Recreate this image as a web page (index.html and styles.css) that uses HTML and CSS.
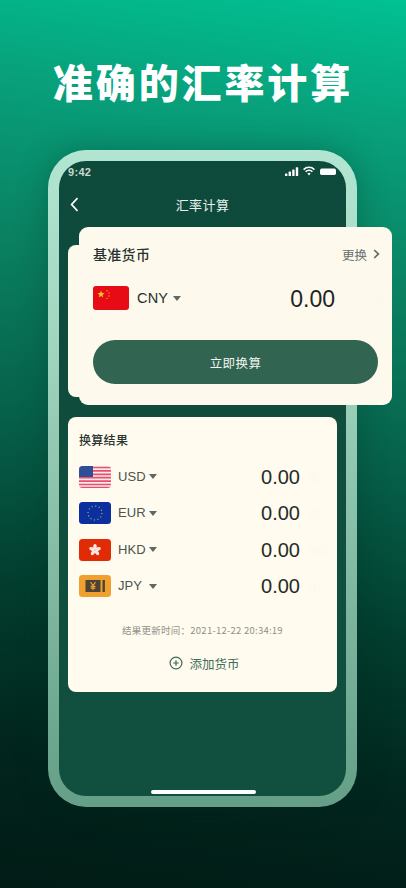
FILE: index.html
```html
<!DOCTYPE html>
<html lang="zh-CN">
<head>
<meta charset="utf-8">
<title>准确的汇率计算</title>
<link rel="stylesheet" href="styles.css">
</head>
<body>
<main class="page">
  <h1 class="headline">准确的汇率计算</h1>
  <section class="phone">
    <div class="screen">
      <div class="status">
        <span class="clock">9:42</span>
        <svg class="status-icons" width="52" height="11" viewBox="0 0 52 11">
          <rect x="0" y="7.4" width="2.4" height="2.6" rx=".6" fill="#fff"/>
          <rect x="3.6" y="5.6" width="2.4" height="4.4" rx=".6" fill="#fff"/>
          <rect x="7.2" y="3.4" width="2.4" height="6.6" rx=".6" fill="#fff"/>
          <rect x="10.8" y="1.2" width="2.4" height="8.8" rx=".6" fill="#fff"/>
          <path d="M18.6 3.6a7.6 7.6 0 0 1 10.8 0M20.6 5.8a4.6 4.6 0 0 1 6.8 0" fill="none" stroke="#fff" stroke-width="1.5"/>
          <path d="M22.4 7.6a2.2 2.2 0 0 1 3.2 0L24 9.6z" fill="#fff"/>
          <rect x="35" y="2.6" width="16" height="6.4" rx="1.8" fill="#fff"/>
        </svg>
      </div>
      <header class="nav">
        <svg class="back" width="9" height="15" viewBox="0 0 9 15"><path d="M7.5 1.2 1.6 7.5l5.9 6.3" fill="none" stroke="#fff" stroke-width="1.7"/></svg>
        <span class="nav-title">汇率计算</span>
      </header>

      <section class="base-card">
        <div class="base-head">
          <span class="base-title">基准货币</span>
          <span class="change">更换
            <svg width="7" height="10" viewBox="0 0 7 10"><path d="M1.2 1 5.4 5 1.2 9" fill="none" stroke="#5f6b66" stroke-width="1.7"/></svg>
          </span>
        </div>
        <div class="base-row">
          <svg class="flag-lg" viewBox="0 0 36 24">
            <rect width="36" height="24" rx="3" fill="#e60b14"/>
            <polygon points="8,4.6 8.9,7.1 11.6,7.2 9.5,8.9 10.2,11.5 8,10 5.8,11.5 6.5,8.9 4.4,7.2 7.1,7.1" fill="#f8c62a"/>
            <circle cx="14" cy="4.8" r=".7" fill="#f3a12a"/><circle cx="16" cy="7" r=".7" fill="#f3a12a"/>
            <circle cx="16" cy="10" r=".7" fill="#f3a12a"/><circle cx="14" cy="12.4" r=".7" fill="#f3a12a"/>
          </svg>
          <span class="code-lg">CNY</span>
          <i class="caret caret-lg"></i>
          <span class="amount-lg">0.00</span>
          <span class="ghost-lg">人民币</span>
        </div>
        <button class="convert">立即换算</button>
      </section>

      <section class="result-card">
        <h2 class="result-title">换算结果</h2>
        <ul class="rates">
          <li class="rate">
            <svg class="flag" viewBox="0 0 32 22">
              <defs><clipPath id="c1"><rect width="32" height="22" rx="3.5"/></clipPath></defs>
              <g clip-path="url(#c1)">
                <rect width="32" height="22" fill="#fbeaea"/>
                <path d="M0 1.5h32M0 4.9h32M0 8.3h32M0 11.7h32M0 15.1h32M0 18.5h32M0 21.5h32" stroke="#e8506f" stroke-width="1.7"/>
                <rect width="14" height="11" fill="#2f5099"/>
              </g>
            </svg>
            <span class="code">USD</span><i class="caret"></i>
            <span class="amount">0.00</span><span class="ghost">美元</span>
          </li>
          <li class="rate">
            <svg class="flag" viewBox="0 0 32 22">
              <rect width="32" height="22" rx="3.5" fill="#0b2f9e"/>
              <circle cx="16" cy="11" r="7" fill="none" stroke="#c9b64a" stroke-width="1.1" stroke-dasharray="1.1 2.56"/>
            </svg>
            <span class="code">EUR</span><i class="caret"></i>
            <span class="amount">0.00</span><span class="ghost">欧元</span>
          </li>
          <li class="rate">
            <svg class="flag" viewBox="0 0 32 22">
              <rect width="32" height="22" rx="3.5" fill="#e12a06"/>
              <g fill="#fde8e0" transform="translate(3.2 2.2) scale(.8)">
                <ellipse cx="16" cy="7" rx="2.2" ry="3.6"/>
                <ellipse cx="16" cy="7" rx="2.2" ry="3.6" transform="rotate(72 16 11)"/>
                <ellipse cx="16" cy="7" rx="2.2" ry="3.6" transform="rotate(144 16 11)"/>
                <ellipse cx="16" cy="7" rx="2.2" ry="3.6" transform="rotate(216 16 11)"/>
                <ellipse cx="16" cy="7" rx="2.2" ry="3.6" transform="rotate(288 16 11)"/>
              </g>
            </svg>
            <span class="code">HKD</span><i class="caret"></i>
            <span class="amount">0.00</span><span class="ghost">港币</span>
          </li>
          <li class="rate">
            <svg class="flag" viewBox="0 0 32 22">
              <rect width="32" height="22" rx="3.5" fill="#efa02e"/>
              <rect x="6.5" y="5" width="15" height="12" fill="#4b4436"/>
              <rect x="23.5" y="5" width="2.4" height="12" fill="#4b4436"/>
              <path d="M11.5 7.2 14 10.6l2.5-3.4M14 10.6V15M11.6 11.4h4.8M11.6 13.2h4.8" fill="none" stroke="#efa02e" stroke-width="1.2"/>
            </svg>
            <span class="code">JPY</span><i class="caret"></i>
            <span class="amount">0.00</span><span class="ghost">日元</span>
          </li>
        </ul>
        <p class="updated">结果更新时间：2021-12-22 20:34:19</p>
        <div class="add">
          <svg width="14" height="14" viewBox="0 0 14 14"><circle cx="7" cy="7" r="5.9" fill="none" stroke="#3d6a59" stroke-width="1.2"/><path d="M7 4.2v5.6M4.2 7h5.6" stroke="#3d6a59" stroke-width="1.2"/></svg>
          <span>添加货币</span>
        </div>
      </section>

      <div class="home-bar"></div>
    </div>
  </section>
</main>
</body>
</html>
```
FILE: styles.css
```css
* { box-sizing: border-box; margin: 0; padding: 0; }
html, body { width: 406px; height: 888px; overflow: hidden; }
body { font-family: "Noto Sans CJK SC", "Noto Sans", sans-serif; }

.page {
  width: 406px;
  height: 888px;
  padding: 51px 0 0 48px;
  overflow: hidden;
  background: linear-gradient(188deg, #01c192 0%, #08a07b 14%, #0a7f60 32%, #06604a 50%, #023d2e 68%, #01261d 84%, #011b15 100%);
}

.headline {
  width: 310px;
  height: 60px;
  margin-bottom: 39px;
  font-size: 40px;
  line-height: 60px;
  font-weight: 900;
  letter-spacing: 2.9px;
  color: #fff;
  text-align: center;
  white-space: nowrap;
}

.phone {
  width: 309px;
  height: 657px;
  padding: 11px;
  border-radius: 38px;
  background: linear-gradient(180deg, #b3e6d2 0%, #a0d5c0 30%, #7db59e 70%, #659f87 100%);
  box-shadow: 0 0 32px rgba(0, 40, 30, .3);
}

.screen {
  position: relative;
  width: 287px;
  height: 635px;
  border-radius: 27px;
  background: linear-gradient(180deg, #0e4a3b 0%, #11503f 100%);
  padding: 6px 0 0;
}

.status {
  display: flex;
  justify-content: space-between;
  align-items: center;
  height: 11px;
  padding: 0 9px 0 9px;
}
.clock { font: 600 11px/11px "Liberation Sans", sans-serif; color: #c9d8d1; letter-spacing: .3px; }
.status-icons { margin-top: -2px; }

.nav {
  position: relative;
  display: flex;
  justify-content: center;
  align-items: center;
  height: 24px;
  margin-top: 15px;
}
.back { position: absolute; left: 11px; top: 4px; }
.nav-title { font-size: 13px; line-height: 24px; color: #e8f0ec; letter-spacing: .4px; }

.base-card {
  position: relative;
  width: 313px;
  height: 178px;
  margin: 10px 0 0 20px;
  padding: 15px 14px 0;
  border-radius: 9px;
  background: #fdf9ec;
}
.base-card::before {
  content: "";
  position: absolute;
  left: -11px;
  top: 18px;
  width: 40px;
  height: 152px;
  border-radius: 8px;
  background: #fdf9ec;
}

.base-head {
  position: relative;
  display: flex;
  justify-content: space-between;
  align-items: center;
  height: 24px;
  margin-right: -2px;
}
.base-title { font-size: 14px; line-height: 24px; font-weight: 500; color: #26302c; letter-spacing: .3px; }
.change { display: flex; align-items: center; gap: 6px; font-size: 12.5px; color: #66706c; }

.base-row {
  position: relative;
  display: flex;
  align-items: center;
  height: 24px;
  margin-top: 20px;
}
.flag-lg { width: 36px; height: 24px; flex: none; }
.code-lg { margin-left: 8px; font: 400 14.5px/24px "Liberation Sans", sans-serif; color: #27302d; letter-spacing: .2px; }
.amount-lg { margin-left: auto; padding-top: 2px; font: 400 23px/24px "Liberation Sans", sans-serif; color: #1e2523; }
.ghost-lg { width: 43px; padding-left: 18px; font-size: 11px; color: #fcf8ea; white-space: nowrap; }

.caret {
  display: block;
  flex: none;
  width: 0;
  height: 0;
  border-left: 4px solid transparent;
  border-right: 4px solid transparent;
  border-top: 5px solid #5d6763;
}
.caret-lg { margin-left: 5px; }

.convert {
  position: relative;
  display: block;
  width: 285px;
  height: 44px;
  margin-top: 30px;
  border: 0;
  border-radius: 22px;
  background: #326452;
  color: #f1f5ee;
  font-family: inherit;
  font-size: 12.5px;
  letter-spacing: .4px;
}

.result-card {
  width: 269px;
  height: 275px;
  margin: 12px 0 0 9px;
  padding: 13px 11px 0;
  border-radius: 8px;
  background: #fffbee;
}
.result-title { font-size: 12px; line-height: 20px; font-weight: 500; color: #2a3430; letter-spacing: .3px; }

.rates { list-style: none; margin-top: 15.5px; }
.rate { display: flex; align-items: center; height: 22px; margin-bottom: 14.5px; }
.flag { width: 32px; height: 22px; flex: none; }
.code { width: 31px; margin-left: 7px; font: 400 13px/22px "Liberation Sans", sans-serif; color: #4a5450; letter-spacing: .1px; white-space: nowrap; }
.amount { margin-left: auto; font: 400 20px/22px "Liberation Sans", sans-serif; color: #252c29; }
.ghost { width: 26px; padding-left: 7px; font-size: 10px; color: #fdf9eb; white-space: nowrap; }

.updated {
  margin-top: 26px;
  font-size: 9.5px;
  line-height: 14px;
  color: #8f918a;
  text-align: center;
  letter-spacing: .25px;
}
.add {
  display: flex;
  justify-content: center;
  align-items: center;
  gap: 6px;
  margin-top: 16px;
  padding-left: 4px;
  height: 20px;
  font-size: 12.5px;
  color: #3f6d5c;
}

.home-bar {
  position: absolute;
  left: 92px;
  bottom: 2px;
  width: 105px;
  height: 4px;
  border-radius: 2px;
  background: #fff;
}
```
